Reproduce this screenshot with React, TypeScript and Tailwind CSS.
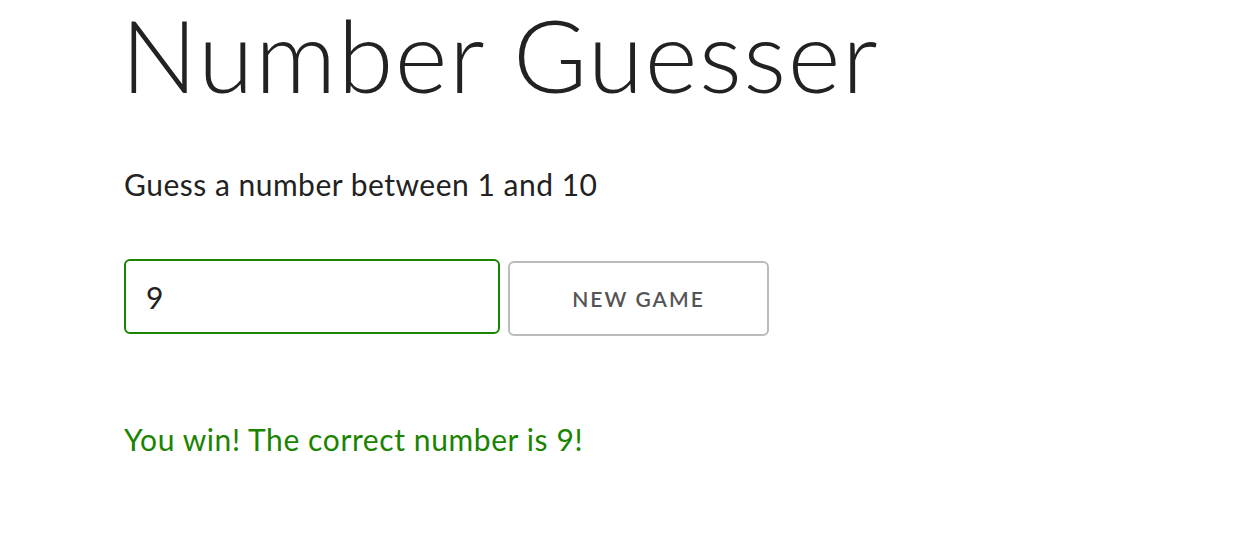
import React, { useState } from "react";

const font = { fontFamily: '"Lato", "Open Sans", sans-serif' };

const App = () => {
  const [guess, setGuess] = useState("9");

  return (
    <div className="min-h-[552px] w-full bg-white text-[#222]" style={font}>
      <div className="pl-[124px] pt-[2px]">
        <h1 className="ml-[-3px] text-[101px] font-light leading-[104px] tracking-[1.5px]">
          Number Guesser
        </h1>
        <p className="mt-[58px] text-[30px] leading-[40px] tracking-[0.5px]">
          Guess a number between 1 and 10
        </p>

        <div className="mt-[55px] flex items-start gap-[8px]">
          <input
            value={guess}
            onChange={(e) => setGuess(e.target.value)}
            className="h-[75px] w-[376px] rounded-[6px] border-2 border-[#1a8400] px-[20px] text-[30px] text-[#222] outline-none"
          />
          <button className="mt-[2px] h-[75px] w-[261px] rounded-[6px] border-2 border-[#bbb] text-[21px] font-semibold uppercase tracking-[2px] text-[#555]">
            New Game
          </button>
        </div>

        {/* Result */}
        <p className="mt-[83px] text-[30px] leading-[40px] tracking-[0.6px] text-[#1a8400]">
          You win! The correct number is 9!
        </p>
      </div>
    </div>
  );
};

export default App;
